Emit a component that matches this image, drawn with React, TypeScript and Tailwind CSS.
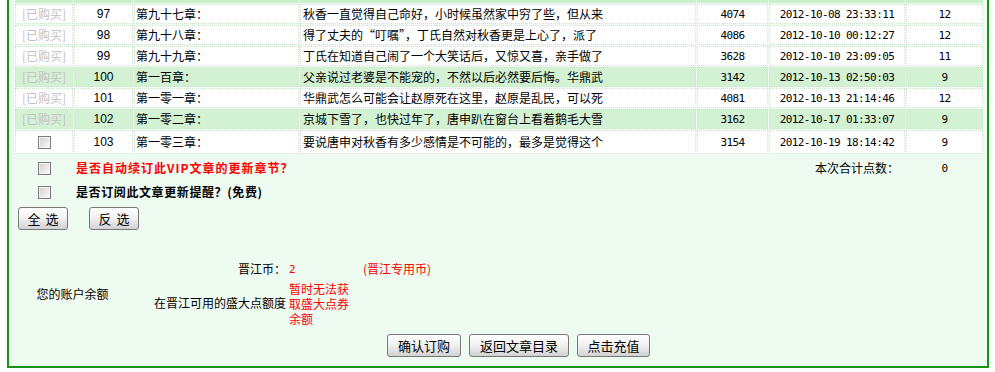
import React from "react";

type Row = {
  n: number;
  t: string;
  s: string;
  w: number;
  d: string;
  p: number;
  hl: boolean;
  bought: boolean;
};

const rows: Row[] = [
  { n: 97, t: "第九十七章：", s: "秋香一直觉得自己命好，小时候虽然家中穷了些，但从来", w: 4074, d: "2012-10-08 23:33:11", p: 12, hl: false, bought: true },
  { n: 98, t: "第九十八章：", s: "得了丈夫的“叮嘱”，丁氏自然对秋香更是上心了，派了", w: 4086, d: "2012-10-10 00:12:27", p: 12, hl: false, bought: true },
  { n: 99, t: "第九十九章：", s: "丁氏在知道自己闹了一个大笑话后，又惊又喜，亲手做了", w: 3628, d: "2012-10-10 23:09:05", p: 11, hl: false, bought: true },
  { n: 100, t: "第一百章：", s: "父亲说过老婆是不能宠的，不然以后必然要后悔。华鼎武", w: 3142, d: "2012-10-13 02:50:03", p: 9, hl: true, bought: true },
  { n: 101, t: "第一零一章：", s: "华鼎武怎么可能会让赵原死在这里，赵原是乱民，可以死", w: 4081, d: "2012-10-13 21:14:46", p: 12, hl: false, bought: true },
  { n: 102, t: "第一零二章：", s: "京城下雪了，也快过年了，唐申趴在窗台上看着鹅毛大雪", w: 3162, d: "2012-10-17 01:33:07", p: 9, hl: true, bought: true },
  { n: 103, t: "第一零三章：", s: "要说唐申对秋香有多少感情是不可能的，最多是觉得这个", w: 3154, d: "2012-10-19 18:14:42", p: 9, hl: false, bought: false },
];

const grid = "grid grid-cols-[58px_59px_165px_396px_71px_136px_77px] gap-x-[1px]";
const mono = "font-['DejaVu_Sans_Mono',monospace] text-[11px] tracking-[-0.6px]";

function Box() {
  return (
    <span className="inline-block w-[13px] h-[13px] border border-[#7d7d7d] bg-linear-to-br from-[#cfcfcf] to-[#fbfbfb] shadow-[inset_0_0_0_1px_#f4f4f4]" />
  );
}

function Btn({ children, w, track }: { children: React.ReactNode; w: string; track?: boolean }) {
  return (
    <div
      className={`${w} h-[23px] flex items-center justify-center border border-[#777] rounded-[3px] bg-linear-to-b from-white via-[#f0f0f0] to-[#d2d2d2] text-[13px] text-black ${track ? "tracking-[5px] pl-[5px]" : ""}`}
    >
      {children}
    </div>
  );
}

export default function App() {
  return (
    <div className="w-[995px] h-[372px] bg-white overflow-hidden font-['Noto_Sans_CJK_SC',sans-serif] text-[12px] text-black leading-none">
      <div className="ml-[7px] w-[982px] h-[368px] border-x-2 border-b-2 border-[#129612] bg-[#eefbf1] flex flex-col pl-[6px]">
        {/* table */}
        <div className="flex flex-col gap-y-[1px]">
          <div className={grid}>
            {[0, 1, 2, 3, 4, 5, 6].map((i) => (
              <div key={i} className="h-[3px] bg-[#c9f1c9]" />
            ))}
          </div>
          {rows.map((r) => {
            const cell = `border border-dotted border-[#cfe3cf] flex items-center ${r.hl ? "bg-[#d3f1d3]" : "bg-white"}`;
            const h = r.bought ? "h-[20px]" : "h-[24px]";
            return (
              <div key={r.n} className={`${grid} ${h}`}>
                <div className={`${cell} justify-center`}>
                  {r.bought ? <span className="text-[#c3bfc7]">[已购买]</span> : <Box />}
                </div>
                <div className={`${cell} justify-center font-['Liberation_Sans',sans-serif] text-[12px]`}>{r.n}</div>
                <div className={`${cell} pl-[1px]`}>{r.t}</div>
                <div className={`${cell} pl-[2px] whitespace-nowrap overflow-hidden`}>{r.s}</div>
                <div className={`${cell} justify-center ${mono}`}>{r.w}</div>
                <div className={`${cell} justify-center ${mono} whitespace-pre`}>{r.d}</div>
                <div className={`${cell} justify-center ${mono}`}>{r.p}</div>
              </div>
            );
          })}
        </div>

        {/* option rows */}
        <div className={`${grid} h-[24px] mt-[2px] items-center`}>
          <div className="flex justify-center">
            <Box />
          </div>
          <div className="col-span-3 pl-[2px] font-bold text-[#ff0000] tracking-[1px]">是否自动续订此VIP文章的更新章节？</div>
          <div className="col-span-2 text-right pr-[6px]">本次合计点数：</div>
          <div className={`text-center ${mono}`}>0</div>
        </div>
        <div className={`${grid} h-[24px] items-center`}>
          <div className="flex justify-center">
            <Box />
          </div>
          <div className="col-span-3 pl-[2px] font-bold tracking-[0.6px]">是否订阅此文章更新提醒？(免费)</div>
        </div>

        {/* select buttons */}
        <div className="flex gap-[21px] pl-[3px] mt-[3px]">
          <Btn w="w-[50px]" track>
            全选
          </Btn>
          <Btn w="w-[50px]" track>
            反选
          </Btn>
        </div>

        {/* balance */}
        <div className="flex mt-[30px]">
          <div className="w-[115px] flex items-center justify-center pt-[2px]">您的账户余额</div>
          <div className="flex flex-col gap-[2px]">
            <div className="flex h-[18px] items-center">
              <div className="w-[156px] text-right">晋江币：</div>
              <div className={`w-[64px] pl-[3px] text-[#ff0000] ${mono}`}>2</div>
              <div className="pl-[13px] text-[#ff0000]">(晋江专用币)</div>
            </div>
            <div className="flex h-[46px] items-center">
              <div className="w-[156px] text-right">在晋江可用的盛大点额度</div>
              <div className="w-[66px] pl-[3px] text-[#ff0000] leading-[15px]">暂时无法获取盛大点券余额</div>
            </div>
          </div>
        </div>

        {/* bottom buttons */}
        <div className="flex gap-[8px] pl-[372px] mt-[8px]">
          <Btn w="w-[74px]">确认订购</Btn>
          <Btn w="w-[100px]">返回文章目录</Btn>
          <Btn w="w-[73px]">点击充值</Btn>
        </div>
      </div>
    </div>
  );
}
